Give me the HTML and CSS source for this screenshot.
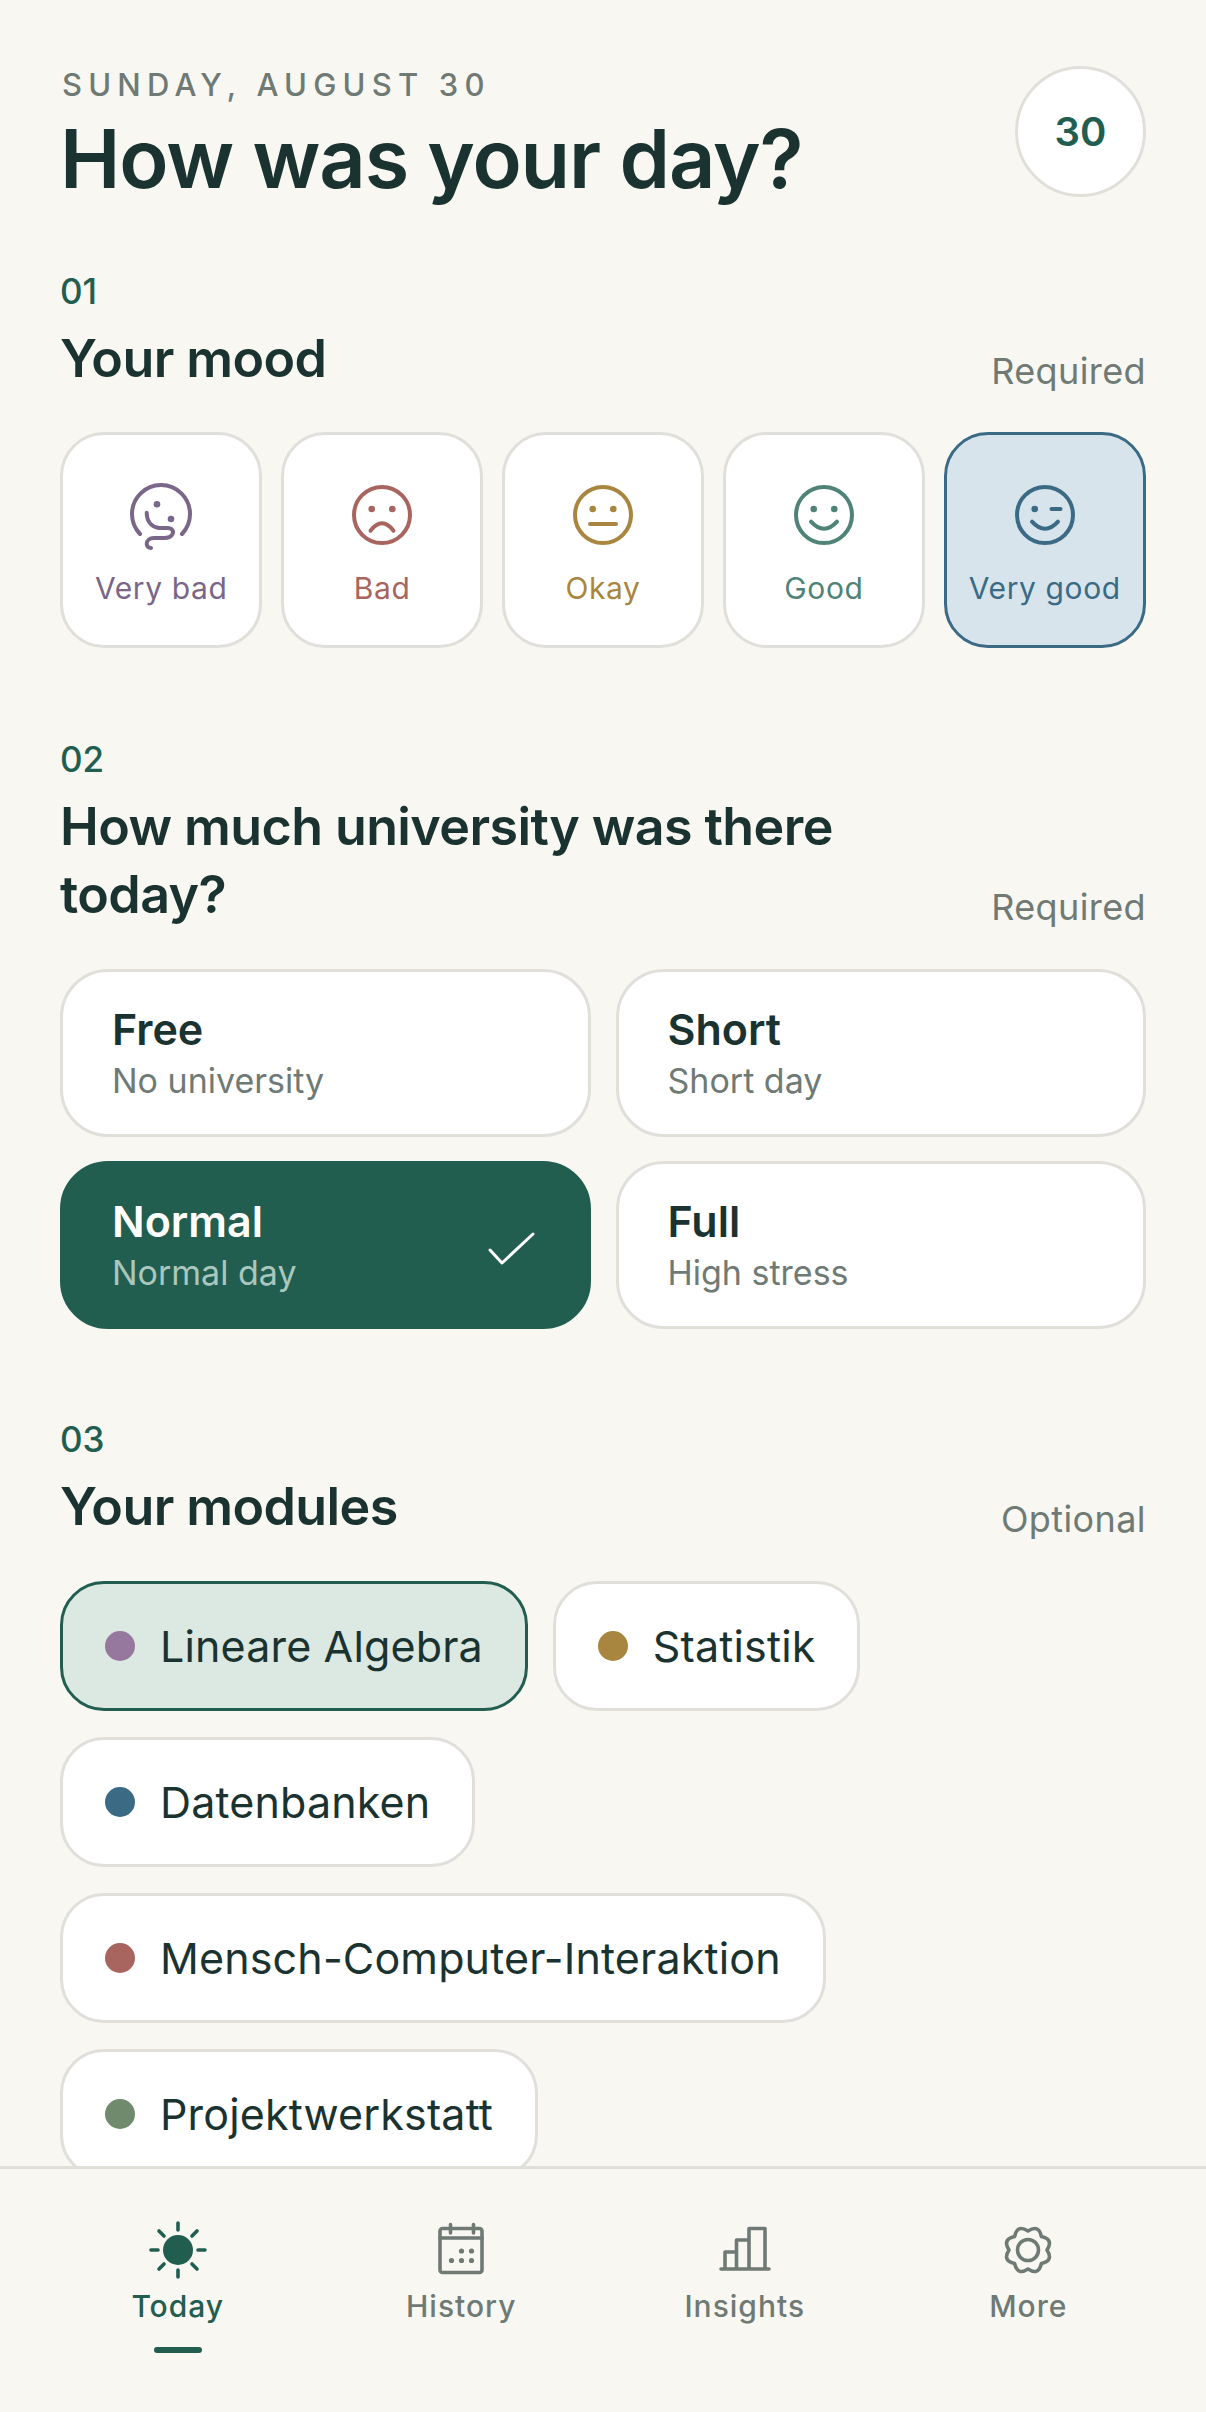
FILE: index.html

```html
<!DOCTYPE html>
<html lang="en">
  <head>
    <meta charset="UTF-8" />
    <meta name="viewport" content="width=device-width, initial-scale=1.0" />
    <title>How was your day?</title>
    <link rel="stylesheet" href="styles.css">
  </head>

  <body>
    <main class="content">
      <header class="top">
        <div>
          <p class="date">SUNDAY, AUGUST 30</p>
          <h1>How was your day?</h1>
        </div>
        <div class="day-badge">30</div>
      </header>

      <section class="section section-mood">
        <p class="num">01</p>
        <div class="section-head">
          <h2>Your mood</h2>
          <span class="hint">Required</span>
        </div>
        <div class="moods">
          <button class="mood mood-vbad">
            <svg class="face" viewBox="0 0 72 72">
              <path d="M15 55A29 29 0 1 1 57 55" />
              <path d="M21.7 33.7C21.7 43 27 48 34 49H42.5C47 49 49 52 47.5 55C46 58.5 43 59 39 59H29C24.5 59 21.7 61.5 21.7 65C21.7 67 23.5 69 26 69" />
              <circle class="eye" cx="32" cy="25.3" r="3.3" />
              <circle class="eye" cx="46" cy="40" r="3.3" />
            </svg>
            <span>Very bad</span>
          </button>
          <button class="mood mood-bad">
            <svg class="face" viewBox="0 0 72 72">
              <circle cx="36" cy="36" r="28" />
              <circle class="eye" cx="25.7" cy="30" r="3.3" />
              <circle class="eye" cx="46.3" cy="30" r="3.3" />
              <path d="M24.5 51.7Q36 37 47.5 51.7" />
            </svg>
            <span>Bad</span>
          </button>
          <button class="mood mood-okay">
            <svg class="face" viewBox="0 0 72 72">
              <circle cx="36" cy="36" r="28" />
              <circle class="eye" cx="25.7" cy="30" r="3.3" />
              <circle class="eye" cx="46.3" cy="30" r="3.3" />
              <path d="M23 45H49" />
            </svg>
            <span>Okay</span>
          </button>
          <button class="mood mood-good">
            <svg class="face" viewBox="0 0 72 72">
              <circle cx="36" cy="36" r="28" />
              <circle class="eye" cx="25.7" cy="30" r="3.3" />
              <circle class="eye" cx="46.3" cy="30" r="3.3" />
              <path d="M23 42.7Q36 57 49 42.7" />
            </svg>
            <span>Good</span>
          </button>
          <button class="mood mood-vgood">
            <svg class="face" viewBox="0 0 72 72">
              <circle cx="36" cy="36" r="28" />
              <circle class="eye" cx="25.7" cy="30" r="3.3" />
              <path d="M42.5 30H51.5" />
              <path d="M23 42.7Q36 57 49 42.7" />
            </svg>
            <span>Very good</span>
          </button>
        </div>
      </section>

      <section class="section section-uni">
        <p class="num">02</p>
        <div class="section-head">
          <h2 class="wrap">How much university was there today?</h2>
          <span class="hint">Required</span>
        </div>
        <div class="loads">
          <button class="load">
            <span class="load-text"><b>Free</b><small>No university</small></span>
          </button>
          <button class="load">
            <span class="load-text"><b>Short</b><small>Short day</small></span>
          </button>
          <button class="load load-on">
            <span class="load-text"><b>Normal</b><small>Normal day</small></span>
            <svg class="check" viewBox="0 0 48 36"><path d="M3 19L15 32L46 3" /></svg>
          </button>
          <button class="load">
            <span class="load-text"><b>Full</b><small>High stress</small></span>
          </button>
        </div>
      </section>

      <section class="section section-modules">
        <p class="num">03</p>
        <div class="section-head">
          <h2>Your modules</h2>
          <span class="hint">Optional</span>
        </div>
        <div class="chips">
          <button class="chip chip-on"><i class="dot dot-purple"></i>Lineare Algebra</button>
          <button class="chip"><i class="dot dot-gold"></i>Statistik</button>
          <button class="chip"><i class="dot dot-blue"></i>Datenbanken</button>
          <button class="chip"><i class="dot dot-red"></i>Mensch-Computer-Interaktion</button>
          <button class="chip"><i class="dot dot-green"></i>Projektwerkstatt</button>
        </div>
      </section>
    </main>

    <nav class="tabs">
      <a class="tab tab-on">
        <svg viewBox="0 0 60 60">
          <circle class="fill" cx="30" cy="30" r="15" />
          <path d="M30 3V10M30 50V57M3 30H10M50 30H57M11 11L16 16M44 44L49 49M49 11L44 16M16 44L11 49" />
        </svg>
        <span>Today</span>
        <i class="tab-bar"></i>
      </a>
      <a class="tab">
        <svg viewBox="0 0 60 60">
          <rect x="9" y="8.5" width="42" height="44" rx="2.5" />
          <path d="M9 18H51M19.5 4.5V13M42.5 4.5V13" />
          <circle class="fill" cx="30.5" cy="31" r="2.6" />
          <circle class="fill" cx="40.5" cy="31" r="2.6" />
          <circle class="fill" cx="20.5" cy="40.5" r="2.6" />
          <circle class="fill" cx="30.5" cy="40.5" r="2.6" />
          <circle class="fill" cx="40.5" cy="40.5" r="2.6" />
        </svg>
        <span>History</span>
      </a>
      <a class="tab">
        <svg viewBox="0 0 60 60">
          <path d="M6 49H54M10 49V32H21.5V49M21.5 49V20H34V49M34 49V8.5H50V49" />
        </svg>
        <span>Insights</span>
      </a>
      <a class="tab">
        <svg viewBox="0 0 60 60">
          <g transform="translate(6 6)">
            <path d="M24 5Q34.7-1.9 37.4 10.6Q49.9 13.3 43 24Q49.9 34.7 37.4 37.4Q34.7 49.9 24 43Q13.3 49.9 10.6 37.4Q-1.9 34.7 5 24Q-1.9 13.3 10.6 10.6Q13.3-1.9 24 5Z" />
            <circle cx="24" cy="24" r="10.5" />
          </g>
        </svg>
        <span>More</span>
      </a>
    </nav>
  </body>
</html>
```

FILE: styles.css

```css
* {
  box-sizing: border-box;
}

html, body {
  height: 100%;
}

body {
  margin: 0;
  display: flex;
  flex-direction: column;
  height: 2412px;
  overflow: hidden;
  background-color: #f8f7f2;
  color: #1a3330;
  font-family: Inter, "Noto Sans", sans-serif;
}

button {
  font-family: inherit;
  cursor: pointer;
}

p, h1, h2 {
  margin: 0;
}

.content {
  flex: 1;
  min-height: 0;
  overflow: hidden;
  padding: 66px 60px 0;
}

.top {
  display: flex;
  justify-content: space-between;
  align-items: flex-start;
}

.date {
  padding: 1px 0 0 2px;
  font-size: 31px;
  line-height: 36px;
  font-weight: 500;
  letter-spacing: 6.2px;
  color: #6f7a75;
}

h1 {
  margin-top: 8px;
  font-size: 81px;
  line-height: 96px;
  font-weight: 600;
  letter-spacing: -1.1px;
}

.day-badge {
  width: 131px;
  height: 131px;
  display: flex;
  align-items: center;
  justify-content: center;
  background: #fff;
  border: 3px solid #e0dfd9;
  border-radius: 50%;
  font-size: 40px;
  font-weight: 600;
  color: #225e50;
}

.section-mood {
  margin-top: 64px;
}

.section-uni {
  margin-top: 91px;
}

.section-modules {
  margin-top: 90px;
}

.num {
  font-size: 35px;
  line-height: 40px;
  font-weight: 500;
  color: #225e50;
}

.section-head {
  display: flex;
  justify-content: space-between;
  align-items: flex-end;
  margin-top: 14px;
}

h2 {
  font-size: 52px;
  line-height: 68px;
  font-weight: 600;
  letter-spacing: -0.6px;
}

h2.wrap {
  width: 830px;
}

.hint {
  font-size: 36px;
  line-height: 44px;
  letter-spacing: 0.4px;
  color: #6f7a75;
}

.moods {
  display: grid;
  grid-template-columns: repeat(5, 1fr);
  gap: 18.5px;
  margin-top: 39px;
}

.mood {
  display: flex;
  flex-direction: column;
  align-items: center;
  height: 216px;
  padding: 44px 0 0;
  background: #fff;
  border: 3px solid #e0dfd9;
  border-radius: 44px;
}

.mood span {
  margin-top: 19px;
  font-size: 30px;
  line-height: 36px;
  letter-spacing: 0.6px;
  color: currentColor;
}

.face {
  width: 72px;
  height: 72px;
  fill: none;
  stroke: currentColor;
  stroke-width: 4;
  stroke-linecap: round;
}

.face .eye {
  fill: currentColor;
  stroke: none;
}

.mood-vbad { color: #7a6688; }
.mood-bad { color: #a8645e; }
.mood-okay { color: #a8863f; }
.mood-good { color: #4f8377; }
.mood-vgood {
  color: #3b6a85;
  background: #d7e4ec;
  border-color: #3b6a85;
}

.loads {
  display: grid;
  grid-template-columns: 1fr 1fr;
  gap: 24px 25px;
  margin-top: 40px;
}

.load {
  display: flex;
  align-items: center;
  justify-content: space-between;
  height: 168px;
  padding: 0 53px 0 49px;
  background: #fff;
  border: 3px solid #e0dfd9;
  border-radius: 48px;
  text-align: left;
  color: #1a3330;
}

.load-text b {
  display: block;
  font-size: 43px;
  line-height: 48px;
  font-weight: 600;
}

.load-text small {
  display: block;
  margin-top: 8px;
  font-size: 34px;
  line-height: 40px;
  color: #6f7a75;
}

.load-on {
  background: #225e50;
  border-color: #225e50;
  color: #fff;
}

.load-on .load-text small {
  color: #a9c7bd;
}

.check {
  width: 48px;
  height: 36px;
  margin-top: 8px;
  fill: none;
  stroke: #fff;
  stroke-width: 3;
  stroke-linecap: round;
  stroke-linejoin: round;
}

.chips {
  display: flex;
  flex-wrap: wrap;
  gap: 26px 25px;
  margin-top: 40px;
}

.chip {
  display: flex;
  align-items: center;
  gap: 25px;
  height: 130px;
  padding: 0 42px;
  background: #fff;
  border: 3px solid #e0dfd9;
  border-radius: 44px;
  font-size: 43px;
  letter-spacing: 0.15px;
  color: #1a3330;
  flex-shrink: 0;
}

.chip-on {
  background: #dce8e2;
  border-color: #225e50;
}

.dot {
  width: 30px;
  height: 30px;
  border-radius: 50%;
}

.dot-purple { background: #96789f; }
.dot-gold { background: #a8863f; }
.dot-blue { background: #3b6a85; }
.dot-red { background: #a8645e; }
.dot-green { background: #6f8a6c; }

.tabs {
  display: grid;
  grid-template-columns: repeat(4, 1fr);
  height: 246px;
  padding: 0 36px;
  background: #f8f7f2;
  border-top: 3px solid #e0dfd9;
  flex-shrink: 0;
}

.tab {
  display: flex;
  flex-direction: column;
  align-items: center;
  padding-top: 51px;
  color: #6f7a75;
}

.tab svg {
  width: 60px;
  height: 60px;
  fill: none;
  stroke: currentColor;
  stroke-width: 3.6;
  stroke-linecap: round;
  stroke-linejoin: round;
}

.tab svg .fill {
  fill: currentColor;
  stroke: none;
}

.tab span {
  margin-top: 8px;
  font-size: 30px;
  line-height: 36px;
  font-weight: 500;
  letter-spacing: 1px;
}

.tab-on {
  color: #225e50;
}

.tab-bar {
  width: 48px;
  height: 6px;
  margin-top: 23px;
  border-radius: 3px;
  background: #225e50;
}
```
